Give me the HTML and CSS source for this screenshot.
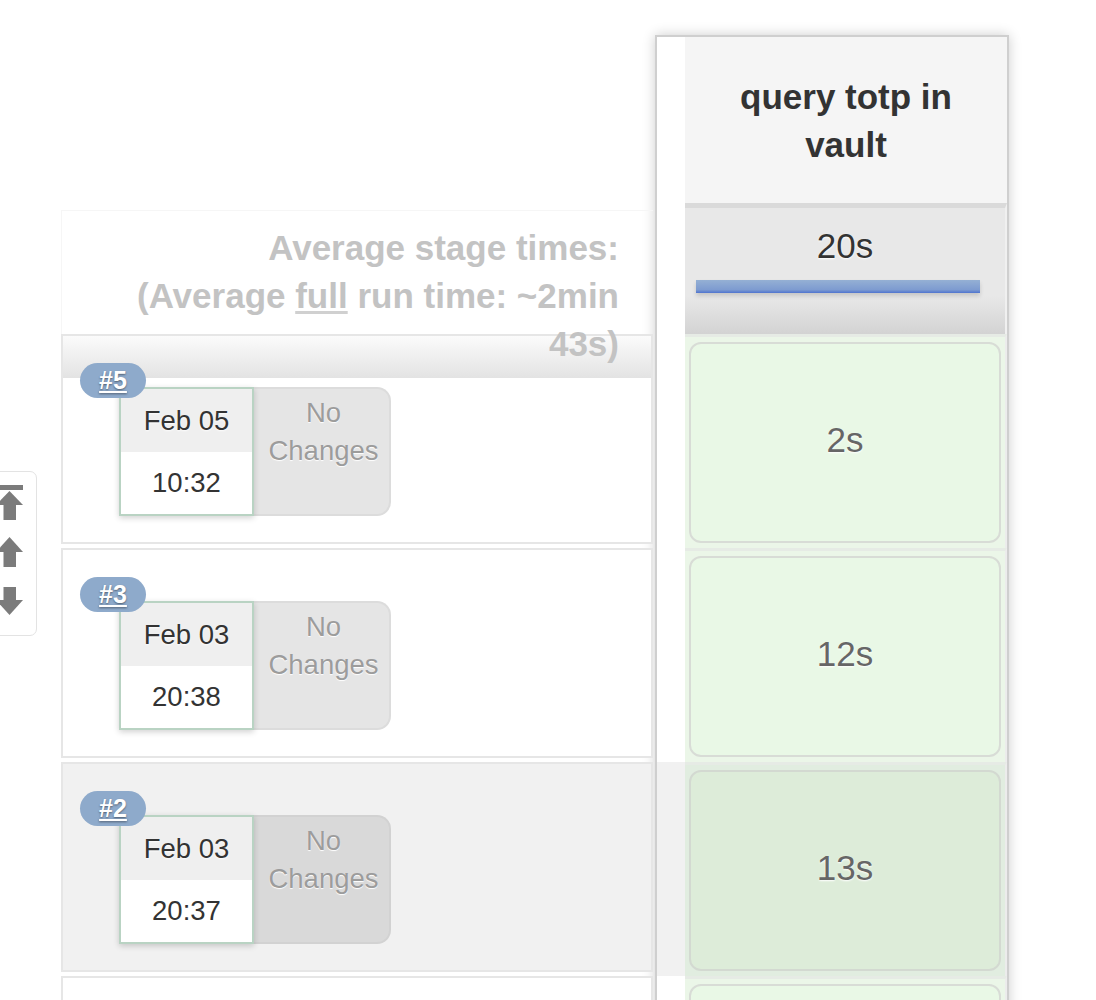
FILE: index.html
```html
<!DOCTYPE html>
<html>
<head>
<meta charset="utf-8">
<title>Stage View</title>
<link rel="stylesheet" href="styles.css">
</head>
<body>
<div class="scroller">
  <svg width="45" height="163" viewBox="-9 472 45 163" aria-hidden="true">
    <g fill="#7b7b7b">
      <rect x="-4" y="485" width="27" height="5"/>
      <polygon points="9.5,491 -4,505 23,505"/>
      <rect x="3.5" y="505" width="12.5" height="15"/>
      <polygon points="9.5,537 -4,552 23,552"/>
      <rect x="3.5" y="552" width="12.5" height="15"/>
      <rect x="3.5" y="587" width="12.5" height="13"/>
      <polygon points="-4,600 23,600 9.5,615"/>
    </g>
  </svg>
</div>

<div class="board">
  <div class="runs">
    <div class="avg-label">Average stage times:<br>(Average <span class="abbr">full</span> run time: ~2min 43s)</div>

    <div class="run first">
      <a class="badge">#5</a>
      <div class="card">
        <div class="date"><div class="day">Feb 05</div><div class="time">10:32</div></div>
        <div class="changes">No Changes</div>
      </div>
    </div>

    <div class="run">
      <a class="badge">#3</a>
      <div class="card">
        <div class="date"><div class="day">Feb 03</div><div class="time">20:38</div></div>
        <div class="changes">No Changes</div>
      </div>
    </div>

    <div class="run hover">
      <a class="badge">#2</a>
      <div class="card">
        <div class="date"><div class="day">Feb 03</div><div class="time">20:37</div></div>
        <div class="changes">No Changes</div>
      </div>
    </div>

    <div class="run"></div>
  </div>

  <div class="stage">
    <div class="srow">
      <div class="strip"></div>
      <div class="head">query totp in vault</div>
    </div>
    <div class="srow">
      <div class="strip"></div>
      <div class="avg">
        <div class="avg-time">20s</div>
        <div class="bar"></div>
      </div>
    </div>
    <div class="srow">
      <div class="strip"></div>
      <div class="cell"><div class="box">2s</div></div>
    </div>
    <div class="srow">
      <div class="strip"></div>
      <div class="cell"><div class="box">12s</div></div>
    </div>
    <div class="srow hover">
      <div class="strip"></div>
      <div class="cell"><div class="box">13s</div></div>
    </div>
    <div class="srow">
      <div class="strip"></div>
      <div class="cell"><div class="box"></div></div>
    </div>
  </div>
</div>
</body>
</html>
```
FILE: styles.css
```css
* { box-sizing: border-box; }

html, body {
  margin: 0;
  height: 100%;
  overflow: hidden;
  background: #fff;
}

body {
  font-family: "Liberation Sans", Arial, Helvetica, sans-serif;
  color: #333;
}

/* floating scroll widget on the left edge */
.scroller {
  position: absolute;
  left: -10px;
  top: 471px;
  width: 47px;
  height: 165px;
  border: 1px solid #e3e3e3;
  border-radius: 7px;
  background: #fff;
}
.scroller svg { display: block; }

.board {
  display: flex;
  align-items: flex-start;
  padding-left: 61px;
}

/* left column: runs */
.runs {
  width: 594px;
  margin-top: 210px;
}

.avg-label {
  position: relative;
  z-index: 1;
  height: 124px;
  margin-right: 2px;
  padding: 13px 34px 0 40px;
  border-top: 1px solid #f6f6f6;
  border-left: 1px solid #f6f6f6;
  text-align: right;
  font-weight: bold;
  font-size: 35px;
  line-height: 48px;
  color: #c3c3c3;
}
.abbr {
  text-decoration: underline;
  text-decoration-color: #d0d0d0;
  text-underline-offset: 3px;
}

.run {
  position: relative;
  height: 210px;
  margin: 0 2px 4px 0;
  border: 2px solid #e6e6e6;
  padding: 51px 0 0 56px;
  background: #fff;
}
.run.first {
  background: linear-gradient(#fbfbfb, #e3e3e3) top left / 100% 42px no-repeat, #fff;
}
.run.hover { background: #f1f1f1; }

.badge {
  position: absolute;
  left: 17px;
  top: 27px;
  z-index: 2;
  width: 66px;
  height: 35px;
  border-radius: 18px;
  background: #8eaacb;
  color: #fff;
  font-weight: bold;
  font-size: 25px;
  line-height: 35px;
  text-align: center;
  text-decoration: underline;
  text-underline-offset: 2px;
  text-shadow: 0 1px 2px rgba(0, 0, 0, 0.45);
}

.card { display: flex; }

.date {
  width: 135px;
  height: 129px;
  border: 2px solid #b9d3c3;
  background: #fff;
  box-shadow: 0 2px 6px rgba(0, 0, 0, 0.18);
  position: relative;
}
.day, .time {
  display: flex;
  align-items: center;
  justify-content: center;
  font-size: 27.5px;
  color: #333;
  text-shadow: 0 1px 2px rgba(255, 255, 255, 0.9);
}
.day { height: 63px; background: #efefef; }
.time { height: 62px; background: #fff; }

.changes {
  width: 137px;
  height: 129px;
  padding: 5px 2px 0 6px;
  background: #e5e5e5;
  border: 2px solid #dcdcdc;
  border-left: none;
  border-radius: 0 14px 14px 0;
  text-align: center;
  font-size: 27.5px;
  line-height: 38px;
  color: #9c9c9c;
  text-shadow: 0 1px 1px #fff;
}
.run.hover .changes {
  background: #d9d9d9;
  border-color: #d2d2d2;
}

/* right column: stage */
.stage {
  width: 354px;
  margin-top: 35px;
  border: 2px solid #cfcfcf;
  border-bottom: none;
  background: #fff;
  box-shadow: 0 0 12px rgba(0, 0, 0, 0.2);
}
.srow { display: flex; }
.strip { width: 28px; flex: none; background: #fff; }
.srow.hover .strip { background: #f1f1f1; }

.head {
  width: 322px;
  height: 166px;
  padding: 2px 20px 0;
  display: flex;
  align-items: center;
  justify-content: center;
  text-align: center;
  background: #f5f5f5;
  font-weight: bold;
  font-size: 35px;
  line-height: 48px;
  color: #333;
}

.avg {
  width: 322px;
  height: 131px;
  padding-top: 14px;
  border-top: 5px solid #dadada;
  border-right: 2px solid #f0f0f0;
  background: linear-gradient(#e8e8e8 70%, #d3d3d3);
}
.avg-time {
  text-align: center;
  font-size: 35px;
  line-height: 48px;
  color: #333;
  text-shadow: 0 1px 2px #fff;
}
.bar {
  width: 284px;
  height: 13px;
  margin: 10px 0 0 11px;
  background: linear-gradient(#95b0d4, #7d9bd0 75%, #4f74cf);
  box-shadow: 0 3px 4px rgba(0, 0, 0, 0.15);
}

.cell {
  width: 322px;
  height: 214px;
  padding: 5px 4px;
  border-top: 3px solid #e6ebe5;
  border-right: 2px solid #ececec;
  background: #ebf6e8;
}
.box {
  height: 100%;
  display: flex;
  align-items: center;
  justify-content: center;
  padding-bottom: 5px;
  border: 2px solid #d8dcd6;
  border-radius: 12px;
  background: #e9f8e6;
  font-size: 35px;
  color: #666;
  text-shadow: 0 1px 2px #fff;
}
.srow.hover .cell { background: #e1ede0; }
.srow.hover .box {
  background: #ddecd9;
  border-color: #d3d9d1;
}
```
